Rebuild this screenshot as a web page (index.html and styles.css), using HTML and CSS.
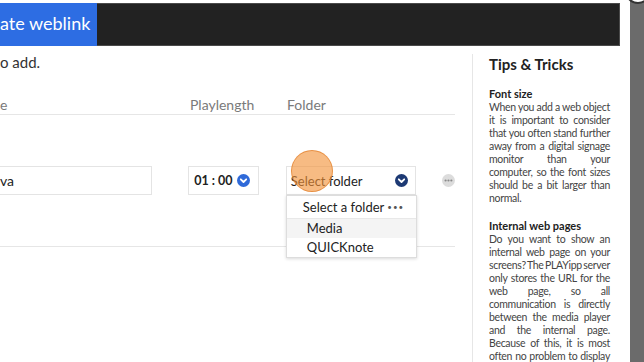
FILE: index.html
```html
<!DOCTYPE html>
<html lang="en">
<head>
  <meta charset="UTF-8">
  <title>Create weblink</title>
  <link rel="stylesheet" href="styles.css">
</head>
<body>
  <div class="screen">
    <div class="modal">
      <div class="modal-head">
        <div class="tab">ate weblink</div>
        <div class="head-fill"></div>
      </div>
      <div class="modal-body">
        <div class="main">
          <p class="intro">o add.</p>
          <div class="cols">
            <span class="c-name">e</span>
            <span class="c-play">Playlength</span>
            <span class="c-folder">Folder</span>
          </div>
          <div class="row">
            <div class="field name">va</div>
            <div class="field time">
              <span>01 : 00</span>
              <svg class="chev" width="13" height="13" viewBox="0 0 13 13"><circle cx="6.5" cy="6.5" r="6.5" fill="#2f6ad9"/><polyline points="3.8,5.3 6.5,8 9.2,5.3" fill="none" stroke="#fff" stroke-width="1.8" stroke-linecap="round" stroke-linejoin="round"/></svg>
            </div>
            <div class="folder-wrap">
              <div class="field folder">
                <span>Select folder</span>
                <svg class="chev" width="13" height="13" viewBox="0 0 13 13"><circle cx="6.5" cy="6.5" r="6.5" fill="#1d3a74"/><polyline points="3.8,5.3 6.5,8 9.2,5.3" fill="none" stroke="#fff" stroke-width="1.8" stroke-linecap="round" stroke-linejoin="round"/></svg>
              </div>
              <ul class="menu">
                <li class="first">Select a folder <span class="dots">•••</span></li>
                <li class="hover">Media</li>
                <li>QUICKnote</li>
              </ul>
              <span class="tap"></span>
            </div>
            <svg class="more" width="13" height="13" viewBox="0 0 13 13"><circle cx="6.5" cy="6.5" r="6.5" fill="#dcdcdc"/><circle cx="3.6" cy="6.5" r="1.1" fill="#8a8a8a"/><circle cx="6.5" cy="6.5" r="1.1" fill="#8a8a8a"/><circle cx="9.4" cy="6.5" r="1.1" fill="#8a8a8a"/></svg>
          </div>
        </div>
        <aside class="tips">
          <h2>Tips &amp; Tricks</h2>
          <h3>Font size</h3>
          <div class="para">
            <div class="ln">When you add a web object</div>
            <div class="ln">it is important to consider</div>
            <div class="ln">that you often stand further</div>
            <div class="ln">away from a digital signage</div>
            <div class="ln">monitor than your</div>
            <div class="ln">computer, so the font sizes</div>
            <div class="ln">should be a bit larger than</div>
            <div class="ln end">normal.</div>
          </div>
          <h3>Internal web pages</h3>
          <div class="para">
            <div class="ln">Do you want to show an</div>
            <div class="ln">internal web page on your</div>
            <div class="ln">screens? The PLAYipp server</div>
            <div class="ln">only stores the URL for the</div>
            <div class="ln">web page, so all</div>
            <div class="ln">communication is directly</div>
            <div class="ln">between the media player</div>
            <div class="ln">and the internal page.</div>
            <div class="ln">Because of this, it is most</div>
            <div class="ln">often no problem to display</div>
          </div>
        </aside>
      </div>
    </div>
    <div class="backdrop"></div>
    <span class="close"></span>
  </div>
</body>
</html>
```

FILE: styles.css
```css
* {
  margin: 0;
  padding: 0;
  box-sizing: border-box;
}
body {
  font-family: Lato, "Open Sans", sans-serif;
  color: #222;
  background: #fff;
  width: 644px;
  height: 362px;
  overflow: hidden;
}
.screen {
  display: flex;
  height: 362px;
  position: relative;
}
.modal {
  width: 630px;
  background: #fff;
}
.backdrop {
  flex: 1;
  background: #6b6b6b;
}
.close {
  position: absolute;
  left: 625px;
  top: -22px;
  width: 26px;
  height: 26px;
  border-radius: 50%;
  background: #fff;
  border: 2px solid #333;
}

/* header */
.modal-head {
  display: flex;
  height: 43px;
  margin: 3px 10px 0 0;
}
.modal-head .tab {
  width: 97px;
  background: #2d6de3;
  color: #fff;
  font-size: 18px;
  line-height: 41px;
  white-space: nowrap;
  overflow: hidden;
}
.modal-head .head-fill {
  flex: 1;
  background: #222;
  border: 1px solid #4a4a4a;
  border-left: 0;
}

/* body */
.modal-body {
  display: flex;
  height: 316px;
}
.main {
  width: 472px;
  padding: 6px 17px 0 0;
}
.intro {
  font-size: 15px;
  line-height: 20px;
  color: #333;
}
.cols {
  display: flex;
  margin-top: 24px;
  font-size: 14px;
  line-height: 18px;
  color: #7a7a7a;
  border-bottom: 1px solid #e6e6e6;
}
.cols .c-name {
  width: 189px;
}
.cols .c-play {
  width: 98px;
  padding-left: 1px;
}
.row {
  display: flex;
  align-items: center;
  height: 132px;
  border-bottom: 1px solid #e6e6e6;
}
.field {
  height: 29px;
  border: 1px solid #e4e4e4;
  display: flex;
  align-items: center;
  font-size: 14px;
  color: #222;
}
.field .chev {
  flex-shrink: 0;
}
.row .name {
  width: 153px;
  border-left: 0;
  margin-right: 36px;
}
.row .time {
  width: 71px;
  padding: 0 8px 0 5px;
  justify-content: space-between;
  margin-right: 27px;
  font-size: 12.5px;
  font-weight: 700;
}
.folder-wrap {
  position: relative;
  width: 131px;
}
.row .folder {
  justify-content: space-between;
  padding: 0 7px 0 4px;
  font-size: 13px;
}
.row .more {
  margin-left: 26px;
}

/* open dropdown */
.menu {
  position: absolute;
  top: 29px;
  left: 0;
  width: 131px;
  background: #fff;
  border: 1px solid #ddd;
  box-shadow: 0 1px 3px rgba(0, 0, 0, 0.15);
  list-style: none;
  font-size: 13px;
  color: #222;
}
.menu li {
  line-height: 19px;
  padding-left: 20px;
}
.menu .first {
  line-height: 22px;
  padding-left: 16px;
  border-bottom: 1px solid #e8e8e8;
}
.menu .dots {
  font-size: 8px;
  color: #555;
  letter-spacing: 1px;
  vertical-align: 2px;
}
.menu .hover {
  background: #f4f4f4;
}
.tap {
  position: absolute;
  left: 5px;
  top: -16px;
  width: 42px;
  height: 42px;
  border-radius: 50%;
  background: rgba(242, 145, 55, 0.62);
  border: 1px solid rgba(225, 125, 40, 0.7);
}

/* tips sidebar */
.tips {
  width: 158px;
  margin-top: 8px;
  border-left: 1px solid #e6e6e6;
  padding: 0 20px 0 16px;
  color: #444;
  font-size: 10.5px;
  line-height: 13px;
}
.tips h2 {
  font-size: 15px;
  line-height: 20px;
  color: #222;
  margin-bottom: 13px;
}
.tips h3 {
  font-size: 11px;
  line-height: 14px;
  color: #222;
}
.tips .para {
  margin-bottom: 14px;
}
.tips .ln {
  white-space: nowrap;
  letter-spacing: -0.3px;
  word-spacing: -1px;
  text-align: justify;
  text-align-last: justify;
}
.tips .ln.end {
  text-align-last: left;
}
```
